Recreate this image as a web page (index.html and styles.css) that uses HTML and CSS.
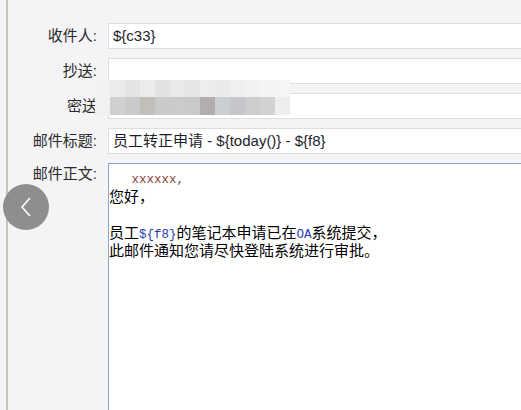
FILE: index.html
```html
<!DOCTYPE html>
<html lang="zh">
<head>
  <meta charset="UTF-8" />
  <title>邮件通知</title>
  <link rel="stylesheet" href="styles.css">
</head>
<body>
  <div class="panel">
    <div class="form">
      <label class="label">收件人:</label>
      <div class="field">${c33}</div>

      <label class="label">抄送:</label>
      <div class="field"></div>

      <label class="label">密送</label>
      <div class="field"></div>

      <label class="label">邮件标题:</label>
      <div class="field">员工转正申请 - ${today()} - ${f8}</div>

      <label class="label label-top">邮件正文:</label>
      <div class="body-text"><span class="asc var">   xxxxxx,</span>
您好，

员工<span class="asc blue">${f8}</span>的笔记本申请已在<span class="asc blue">OA</span>系统提交，
此邮件通知您请尽快登陆系统进行审批。</div>
    </div>
  </div>

  <!-- 打码区域 -->
  <div class="mosaic">
    <div class="mosaic-row light">
      <span style="background:#f2f2f2"></span><span style="background:#ebebed"></span><span style="background:#e4e4e6"></span><span style="background:#ebebed"></span><span style="background:#e2e2e4"></span><span style="background:#e9e9eb"></span><span style="background:#e6e6e8"></span><span style="background:#ededef"></span><span style="background:#eaeaec"></span><span style="background:#efeff1"></span><span style="background:#f2f2f4"></span><span style="background:#f4f4f6"></span><span style="background:#f5f5f6"></span>
    </div>
    <div class="mosaic-row">
      <span style="background:#f1f1ef"></span><span style="background:#d0d0d3"></span><span style="background:#cacaca"></span><span style="background:#c2beba"></span><span style="background:#cacaca"></span><span style="background:#cbcbcd"></span><span style="background:#c9c9c9"></span><span style="background:#b2aeae"></span><span style="background:#cbcfd2"></span><span style="background:#c6c6ca"></span><span style="background:#cdcdd0"></span><span style="background:#d2d2d4"></span><span style="background:#eeeef0"></span>
    </div>
  </div>

  <div class="back-btn">
    <svg width="16" height="22" viewBox="0 0 16 22"><path d="M12 2 L4 11 L12 20" fill="none" stroke="#fff" stroke-width="1.6"/></svg>
  </div>
</body>
</html>
```

FILE: styles.css
```css
body {
  margin: 0;
  background: #f4f4f6;
  font-family: "Liberation Sans", "Noto Sans CJK SC", sans-serif;
  color: #333;
  overflow: hidden;
  height: 410px;
  position: relative;
}
.panel {
  margin-left: 6px;
  border-left: 2px solid #c4c4bc;
  height: 410px;
  width: 560px;
  box-sizing: border-box;
  padding-top: 23px;
}
.form {
  display: grid;
  grid-template-columns: 92px 1fr;
  column-gap: 8px;
  row-gap: 9px;
  grid-auto-rows: 26px;
}
.label {
  font-size: 15px;
  text-align: right;
  padding-right: 3px;
  line-height: 26px;
  color: #2a2a2a;
}
.label-top {
  line-height: 20px;
  padding-top: 1px;
}
.field {
  background: #fff;
  border: 1px solid #dedee0;
  font-size: 15px;
  line-height: 24px;
  padding-left: 4px;
  color: #1e1e2a;
}
.body-text {
  background: #fff;
  border: 1px solid #8ea6cc;
  border-right: none;
  height: 260px;
  padding-top: 4px;
  white-space: pre;
  font-family: "Noto Sans CJK SC", sans-serif;
  font-size: 15px;
  line-height: 18px;
  color: #000;
}
.asc {
  font-family: "Liberation Mono", monospace;
  font-size: 12.5px;
  line-height: 1;
}
.var {
  color: #8a3f3a;
}
.blue {
  color: #2a3ab0;
}
.mosaic {
  position: absolute;
  left: 95px;
  top: 80px;
  filter: blur(0.6px);
}
.mosaic-row {
  display: flex;
  height: 18px;
}
.mosaic-row.light {
  height: 17px;
}
.mosaic-row span {
  width: 15px;
}
.back-btn {
  position: absolute;
  left: 3px;
  top: 184px;
  width: 46px;
  height: 46px;
  border-radius: 50%;
  background: #8e8e8e;
  display: flex;
  align-items: center;
  justify-content: center;
}
```
